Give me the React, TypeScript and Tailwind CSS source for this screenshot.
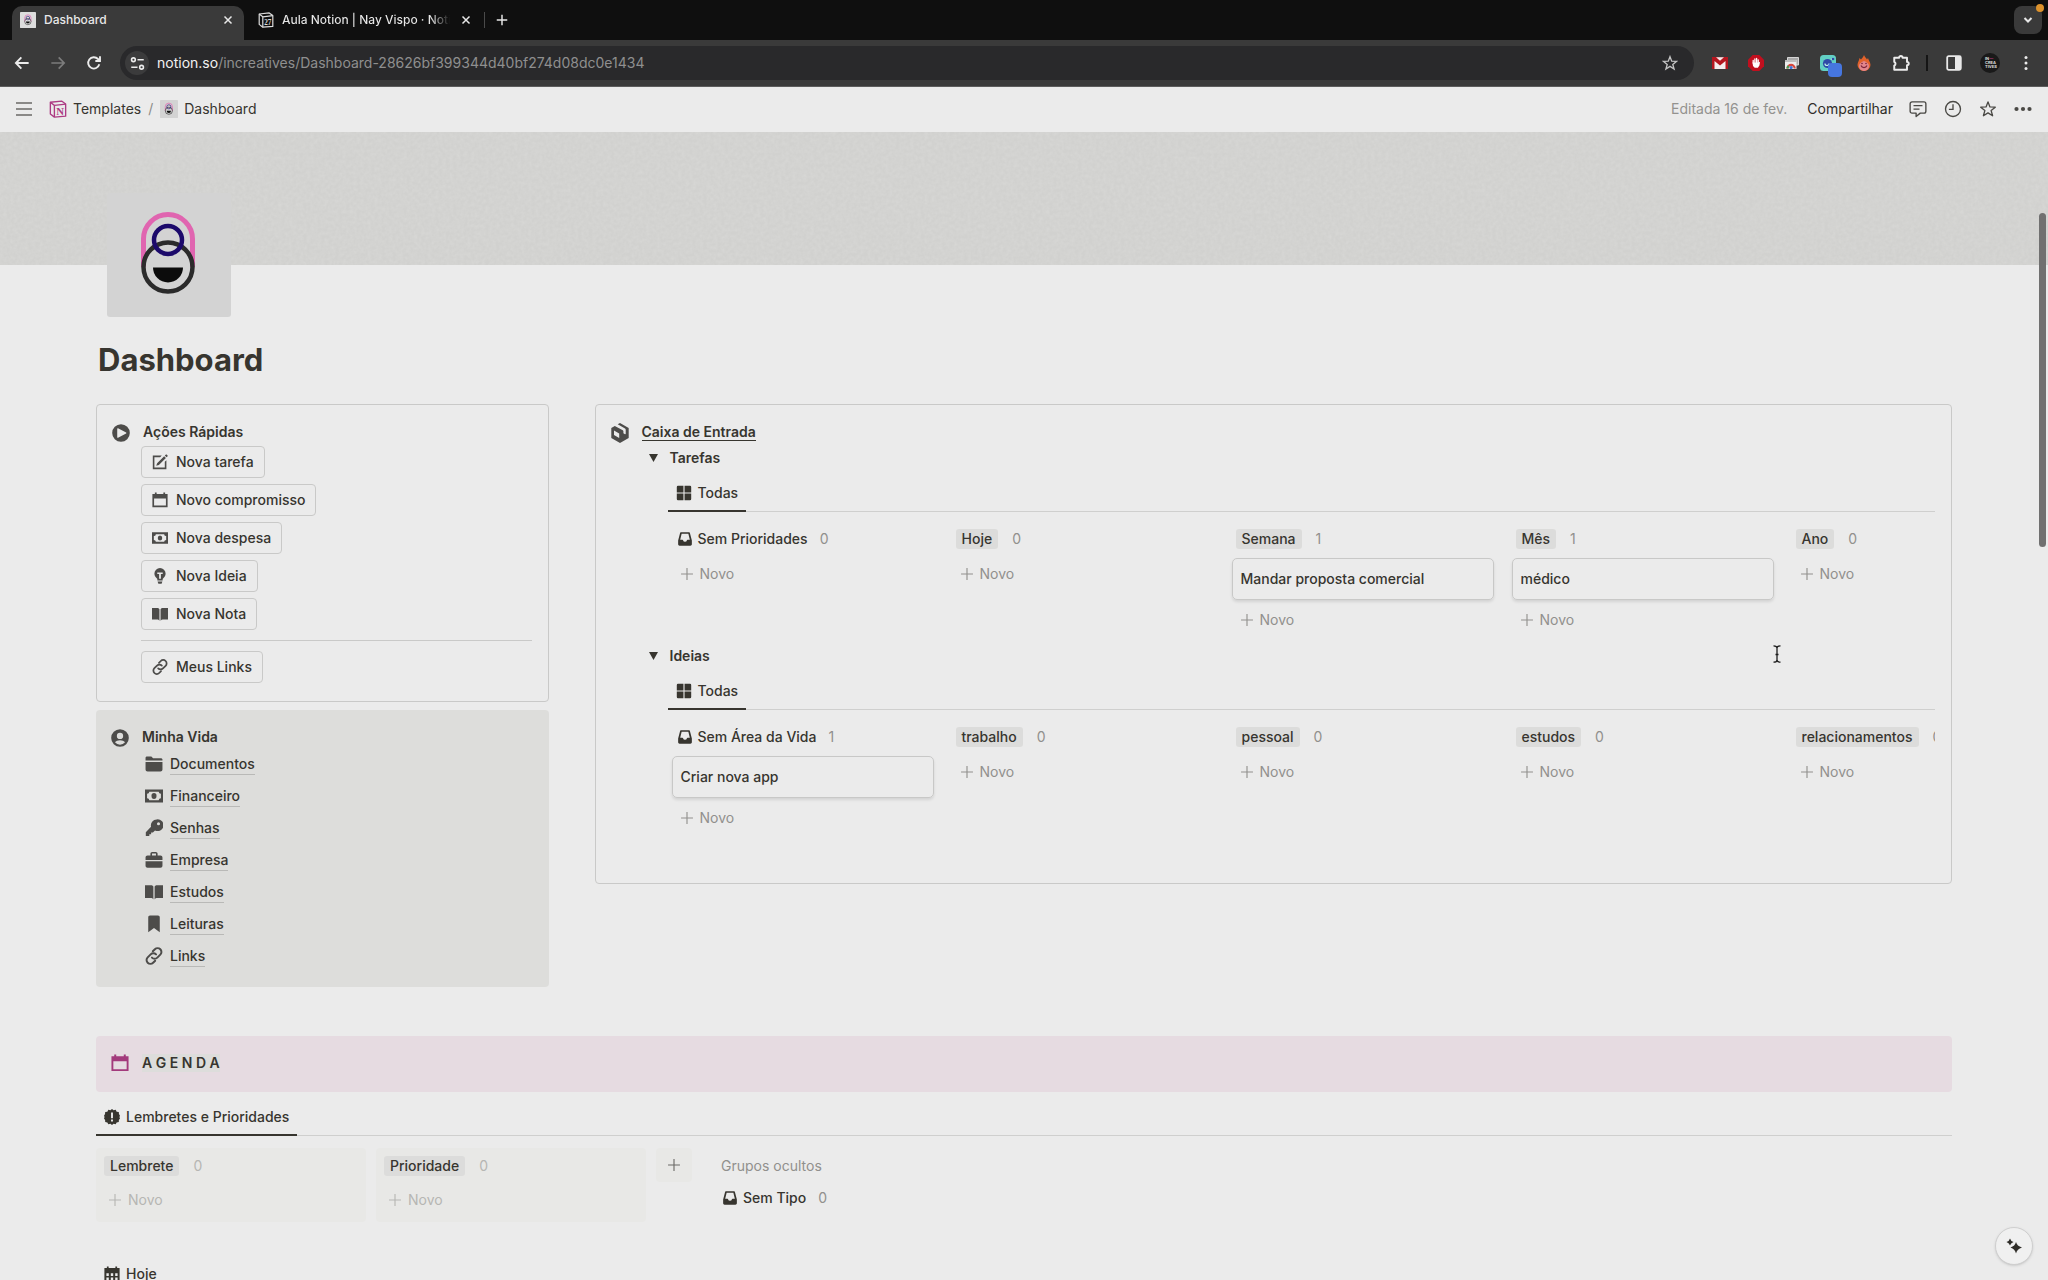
import React from "react";

type IconProps = { className?: string };

/* ---------- solid page icons, 20 x 20 grid ---------- */

const Svg = ({ className, children }: { className?: string; children: React.ReactNode }) => (
  <svg viewBox="0 0 20 20" fill="currentColor" aria-hidden="true" className={`shrink-0 ${className ?? ""}`}>
    {children}
  </svg>
);

const PlayIcon = ({ className }: IconProps) => (
  <Svg className={className}>
    <path fillRule="evenodd" d="M10 .2a9.800 9.800 0 1 0 0 19.600A9.800 9.800 0 0 0 10 .2ZM5.800 5.200v9.600c0 .5.500.7.900.5l9-4.700c.4-.3.4-.9 0-1.100l-9-4.800c-.4-.2-.9 0-.9.500Z" />
  </Svg>
);
const EditIcon = ({ className }: IconProps) => (
  <Svg className={className}>
    <path d="M1 2h11.200l-2 2H3v13h13v-7.200l2-2V19H1z" />
    <path d="m15.200 2.700 2.200 2.200-8.800 8.800-3.300 1.100 1.100-3.300zM16 1.900l1.100-1.100a.9.900 0 0 1 1.300 0l.9.900a.9.900 0 0 1 0 1.300l-1.100 1.100z" />
  </Svg>
);
const CalendarIcon = ({ className }: IconProps) => (
  <Svg className={className}>
    <path fillRule="evenodd" d="M3.600.5h2.200V2.500h8.400V.5h2.200v2h3.100V19H.5V2.500h3.100zM2.600 8v9h14.800V8z" />
  </Svg>
);
const CashIcon = ({ className }: IconProps) => (
  <Svg className={className}>
    <path fillRule="evenodd" d="M0 2.800h20v14.400H0zM4.800 5.200a2.600 2.600 0 0 1-2.500 2.400v4.800a2.600 2.600 0 0 1 2.500 2.400h10.400a2.600 2.600 0 0 1 2.500-2.400V7.600a2.600 2.600 0 0 1-2.500-2.400z" />
    <ellipse cx="10" cy="10" rx="2.800" ry="3.200" />
  </Svg>
);
const BulbIcon = ({ className }: IconProps) => (
  <Svg className={className}>
    <path fillRule="evenodd" d="M10 0a7 7 0 0 0-7 7c0 2.600 1.300 4.500 2.900 5.900.5.500.8 1 .8 1.700v.9h6.600v-.9c0-.7.300-1.200.8-1.700C15.700 11.500 17 9.600 17 7a7 7 0 0 0-7-7ZM6.600 5.600h6.800v1.900h-2.300v6H8.900v-6H6.600z" />
    <path d="M7 16.800h6l-1 3H8z" />
  </Svg>
);
const BookIcon = ({ className }: IconProps) => (
  <Svg className={className}>
    <path d="M0 2.500h6.500c1.200 0 2.200.6 2.800 1.500v14.300c-.7-.9-1.700-1.500-2.800-1.500H0zM20 2.500h-6.500c-1.200 0-2.200.6-2.800 1.500v14.300c.7-.9 1.700-1.500 2.800-1.500H20z" />
  </Svg>
);
const LinkIcon = ({ className }: IconProps) => (
  <Svg className={className}>
    <g fill="none" stroke="currentColor" strokeWidth="2.200" strokeLinecap="round">
      <path d="M8.700 4.800 11 2.500a4.200 4.200 0 0 1 6 0 4.200 4.200 0 0 1 0 6l-3.300 3.300a4.200 4.200 0 0 1-6 0" />
      <path d="M11.300 15.200 9 17.500a4.200 4.200 0 0 1-6 0 4.200 4.200 0 0 1 0-6l3.300-3.300a4.200 4.200 0 0 1 6 0" />
    </g>
  </Svg>
);
const PersonIcon = ({ className }: IconProps) => (
  <Svg className={className}>
    <path fillRule="evenodd" d="M10 .2a9.800 9.800 0 1 0 0 19.600A9.800 9.800 0 0 0 10 .2ZM10 4.200a3.500 3.500 0 1 1 0 7 3.500 3.500 0 0 1 0-7ZM4.400 14.800c1-1.500 3.200-2.300 5.600-2.300s4.600.8 5.600 2.300A7.300 7.300 0 0 1 10 17.400a7.300 7.300 0 0 1-5.600-2.600Z" />
  </Svg>
);
const FolderIcon = ({ className }: IconProps) => (
  <Svg className={className}>
    <path d="M.6 6V3.200c0-.9.700-1.600 1.600-1.600h4.200c.5 0 .9.200 1.200.5L9 3.500h8.600c1 0 1.800.7 1.800 1.600V6zM.6 7.700h18.800v8.500c0 1.200-1 2.200-2.200 2.200H2.800c-1.200 0-2.200-1-2.200-2.200z" />
  </Svg>
);
const KeyIcon = ({ className }: IconProps) => (
  <Svg className={className}>
    <path fillRule="evenodd" d="M13 .5a6.500 6.500 0 0 0-6.300 8L.9 14.700v4.200h3.900v-2h2v-2h2l2.300-2.200a6.500 6.500 0 1 0 1.900-12.200ZM15 3.600a1.700 1.700 0 1 1 0 3.400 1.700 1.700 0 0 1 0-3.400Z" />
  </Svg>
);
const BriefcaseIcon = ({ className }: IconProps) => (
  <Svg className={className}>
    <path fillRule="evenodd" d="M6 5V3c0-1.100.9-2 2-2h4c1.100 0 2 .9 2 2v2h3.200c1.200 0 2.200 1 2.200 2.200V10H.6V7.200C.6 6 1.600 5 2.800 5zm1.800 0h4.400V2.900H7.800z" />
    <path d="M.6 11.500h18.800v5c0 1.200-1 2.200-2.200 2.200H2.800c-1.200 0-2.200-1-2.200-2.200z" />
  </Svg>
);
const BookmarkIcon = ({ className }: IconProps) => (
  <Svg className={className}>
    <path d="M5.500.6h9c1 0 1.900.8 1.900 1.900v16.600L10 14.500l-6.400 4.600V2.500C3.600 1.400 4.500.6 5.500.6Z" />
  </Svg>
);
const BoxIcon = ({ className }: IconProps) => (
  <Svg className={className}>
    <path d="M10 0 7.700 1.300l7.300 4.200c.4.300.7.700.7 1.200v4.100c0 .4-.4.600-.7.400l-1.600-.9V8.200c0-.4-.2-.7-.6-.9L4.800 2.900 1.300 5v10L10 20l8.700-5V5zM4 7.600l5.200 3v4.300L4 11.900z" fillRule="evenodd" />
  </Svg>
);
const AlertBadgeIcon = ({ className }: IconProps) => (
  <Svg className={className}>
    <path fillRule="evenodd" d="m10 0 2 1.700L14.600 1l1.200 2.300 2.700.4.200 2.700L20 8.500 19.300 10l.7 1.800-1.400 2-.1 2.500-2.700.5L14.600 19l-2.600-.6L10 20l-2-1.600-2.600.6-1.200-2.200-2.700-.5-.1-2.500-1.400-2L.7 10 0 8.500l1.300-2.100.2-2.700 2.700-.4L5.400 1 8 1.700zM8.800 4.500v7h2.400v-7zm0 8.700v2.300h2.400v-2.300z" />
  </Svg>
);
const MonthIcon = ({ className }: IconProps) => (
  <Svg className={className}>
    <path fillRule="evenodd" d="M3.600.5h2.200v2h8.400v-2h2.200v2h3.100V20H.5V2.500h3.100zM3 9v3.500h3V9zm5.500 0v3.500h3V9zM14 9v3.500h3V9zM3 14.500V18h3v-3.500zm5.500 0V18h3v-3.500zm5.500 0V18h3v-3.500z" />
  </Svg>
);
const GridIcon = ({ className }: IconProps) => (
  <Svg className={className}>
    <path d="M2.500 1h6.800v8.300H1V2.500A1.500 1.500 0 0 1 2.500 1ZM10.700 1h6.800A1.500 1.500 0 0 1 19 2.500v6.800h-8.300zM1 10.700h8.300V19H2.500A1.500 1.500 0 0 1 1 17.500zM10.700 10.700H19v6.800a1.500 1.500 0 0 1-1.500 1.500h-6.800z" />
  </Svg>
);
const InboxIcon = ({ className }: IconProps) => (
  <Svg className={className}>
    <path fillRule="evenodd" d="M4.600.5h10.800c.9 0 1.600.6 1.700 1.400L19.800 12v5.500c0 1.100-.9 2-2 2H2.200c-1.100 0-2-.9-2-2V12L2.900 1.900C3 1.100 3.700.5 4.600.5Zm.6 2.100L3.100 11h3.300c.4 0 .7.300.8.700a2.900 2.900 0 0 0 5.600 0c.1-.4.4-.7.8-.7h3.300l-2.100-8.400z" />
  </Svg>
);
const PlusIcon = ({ className }: IconProps) => (
  <Svg className={className}>
    <path d="M9.200 1.500h1.600v7.700h7.700v1.600h-7.700v7.700H9.200v-7.700H1.500V9.200h7.700z" />
  </Svg>
);

/* ---------- header and browser icons ---------- */

const Line = ({ className, w = 2, children }: { className?: string; w?: number; children: React.ReactNode }) => (
  <svg viewBox="0 0 24 24" fill="none" stroke="currentColor" strokeWidth={w} aria-hidden="true" className={`shrink-0 ${className ?? ""}`}>
    {children}
  </svg>
);
const STAR = "m12 2.500 2.600 6.700 7.100.4-5.500 4.500 1.900 6.900-6.100-3.900L5.900 21l1.900-6.900-5.500-4.500 7.100-.4z";

const CapsuleLogo = ({ className, bg = "#d3d3d3" }: { className?: string; bg?: string }) => (
  <svg viewBox="0 0 124 124" aria-hidden="true" className={`shrink-0 ${className ?? ""}`}>
    <rect width="124" height="124" rx="3" fill={bg} />
    <path d="M36.500 74V46a24.500 24.500 0 0 1 49 0V74" fill="none" stroke="#e065b0" strokeWidth="5" />
    <circle cx="61" cy="74" r="24.500" fill="none" stroke="#2b2b2b" strokeWidth="4.500" />
    <circle cx="61" cy="47" r="14" fill="none" stroke="#1c0a6b" strokeWidth="4.500" />
    <path d="M46 74.500h30a15 15 0 0 1-30 0Z" fill="#0c0c0c" />
  </svg>
);

const NotionCube = ({ className, color, label }: { className?: string; color: string; label: string }) => (
  <svg viewBox="0 0 20 20" aria-hidden="true" className={`shrink-0 ${className ?? ""}`}>
    <path d="M1.500 2.500 14 1.200l4.500 3.300V18L6 19l-4.500-3.500z" fill="none" stroke={color} strokeWidth="1.500" strokeLinejoin="round" />
    <path d="M1.500 2.500 6 6v13M6 6l12.500-1.500" fill="none" stroke={color} strokeWidth="1.500" />
    <text x="12.300" y="16.500" textAnchor="middle" fontSize={label.length > 1 ? 9 : 12} fontWeight="700" fontFamily="Liberation Serif, serif" fill={color}>
      {label}
    </text>
  </svg>
);

/* ---------- browser chrome ---------- */

function BrowserChrome() {
  return (
    <header className="shrink-0">
      <div className="flex h-10 items-end justify-between bg-[#0f0f0f] text-xs text-[#e8e8e8]">
        <div className="flex items-center pl-3">
          <div className="flex h-[34px] w-58 items-center rounded-t-[10px] bg-[#3a3a3a] pr-1.5 pb-1.5 pl-2">
            <CapsuleLogo className="size-4" bg="#dcdcdc" />
            <span className="ml-2 flex-1 font-medium">Dashboard</span>
            <button aria-label="Fechar aba Dashboard" className="p-1">
              <Line className="size-3" w={3}><path d="M5 5 19 19M19 5 5 19" /></Line>
            </button>
          </div>
          <div className="flex h-[34px] items-center pb-1.5 pl-3.5">
            <NotionCube className="size-4" color="#dddddd" label="27" />
            <span className="ml-2 w-[168px] overflow-hidden bg-linear-to-r from-[#e8e8e8] from-88% to-transparent bg-clip-text font-medium whitespace-nowrap text-transparent">
              Aula Notion | Nay Vispo · Notion
            </span>
            <button aria-label="Fechar aba Aula Notion" className="ml-1.5 p-1">
              <Line className="size-3" w={3}><path d="M5 5 19 19M19 5 5 19" /></Line>
            </button>
            <span className="ml-2 h-4 w-px bg-[#4a4a4a]" />
            <button aria-label="Nova aba" className="ml-1.5 p-1">
              <Line className="size-3.5" w={2.500}><path d="M12 3v18M3 12h18" /></Line>
            </button>
          </div>
        </div>
        <div className="relative mr-1.5 mb-1.5">
          <button aria-label="Pesquisar abas" className="flex size-7 items-center justify-center rounded-lg bg-[#3a3a3a]">
            <Line className="size-3" w={4}><path d="m5 8 7 7 7-7" /></Line>
          </button>
          <span className="absolute -top-0.5 -right-0.5 size-2 rounded-full bg-[#dd922c]" />
        </div>
      </div>

      <div className="flex h-[47px] items-center border-b border-[#5c5c5c] bg-[#3a3a3a] pr-4 pl-3 text-[#ececec]">
        <button aria-label="Voltar" className="p-0.5"><Line className="size-4" w={2.800}><path d="M22 12H3M11 3.500 2.800 12l8.200 8.500" /></Line></button>
        <button aria-label="Avançar" className="ml-4 p-0.5 text-[#7c7c7c]"><Line className="size-4" w={2.600}><path d="M2 12h19M13 3.500l8.200 8.500-8.200 8.500" /></Line></button>
        <button aria-label="Recarregar" className="ml-4 p-0.5">
          <Line className="size-4" w={2.800}><path d="M20 14a8.500 8.500 0 1 1-2-8l2.500 2.500" /><path d="M21 2v7h-7" /></Line>
        </button>
        <div className="ml-4 flex h-[34px] flex-1 items-center rounded-full bg-[#29292b] pr-4 pl-[5px]">
          <button aria-label="Informações do site" className="flex size-6 items-center justify-center rounded-full bg-[#3b3b3c]">
            <Line className="size-[15px]" w={2.500}>
              <circle cx="5.500" cy="6" r="3" /><path d="M12 6h10M2 18h10" /><circle cx="18.500" cy="18" r="3" />
            </Line>
          </button>
          <p className="ml-2 flex-1 text-sm text-[#8f8f8f]">
            <span className="text-[#f2f2f2]">notion.so</span>/increatives/Dashboard-28626bf399344d40bf274d08dc0e1434
          </p>
          <button aria-label="Adicionar aos favoritos" className="text-[#c4c4c4]"><Line className="size-4"><path d={STAR} /></Line></button>
        </div>

        <div className="ml-[18px] flex items-center gap-5">
          <button aria-label="Gmail">
            <svg viewBox="0 0 16 16" className="size-4" aria-hidden="true">
              <path d="M0 2h16v12H0z" fill="#b3161f" />
              <path d="M2.500 6 8 10.500 13.500 6v8h-11z" fill="#f3eded" />
              <path d="M4 2.200h8L8 5.800z" fill="#f3eded" />
            </svg>
          </button>
          <button aria-label="AdBlock">
            <svg viewBox="0 0 16 16" className="size-4" aria-hidden="true">
              <path d="M4.700 0h6.600L16 4.700v6.600L11.300 16H4.700L0 11.300V4.700z" fill="#c10f1e" />
              <path d="M5.200 8V5.500M6.900 7.500V4M8.600 7.500V3.500M10.200 8V4.800" stroke="#fff" strokeWidth="1.300" strokeLinecap="round" />
              <path d="M4.500 7.500h6.300l1.300-.8-.7 3.800-1.500 2.300H6.700L5 11z" fill="#fff" />
            </svg>
          </button>
          <button aria-label="Captura de tela">
            <svg viewBox="0 0 16 16" className="size-4" aria-hidden="true">
              <path d="M3.500 2.500H14.500v7.500H3.500z" fill="#a9a9a9" stroke="#d5d5d5" />
              <path d="M1 5h11.500v9H1z" fill="#ececec" />
              <path d="M1 5h11.500v2H1z" fill="#bdbdbd" />
              <path d="M3.500 13.500a3.600 3.600 0 0 1 7.200 0" fill="none" stroke="#d5473d" strokeWidth="2.200" />
              <path d="M3.500 13.500a3.600 3.600 0 0 1 1-2.500" fill="none" stroke="#3d9c55" strokeWidth="2.200" />
              <circle cx="7.100" cy="12.600" r="1.600" fill="#3f73d8" />
            </svg>
          </button>
          <button aria-label="Assistente de extensão" className="relative">
            <svg viewBox="0 0 16 16" className="size-4" aria-hidden="true">
              <rect width="16" height="16" rx="3.500" fill="#62cfc4" />
              <circle cx="7.500" cy="8.500" r="4.600" fill="#2f4aa8" />
              <path d="M5 8.500a2 2 0 0 0 4 0M11 4.500l2.500-1.500" stroke="#bfeee6" fill="none" strokeWidth="1.200" />
              <circle cx="13" cy="4" r="1.300" fill="#2f4aa8" />
            </svg>
            <span className="absolute top-2 left-2 size-3.5 rounded-[4px] bg-[#4676e0]" />
          </button>
          <button aria-label="Hotjar">
            <svg viewBox="0 0 16 16" className="size-4" aria-hidden="true">
              <path d="M8 0c.5 2 2.500 3 3 4.500L12 3c.3 2 2.500 4 2.500 7A6.200 6.200 0 0 1 8 16a6.200 6.200 0 0 1-6.500-6c0-3 2-5 2-7L5 4.500C6 3 7.500 2 8 0Z" fill="#e2622b" />
              <path d="M8 6c2.500 1 5 2.500 5 5a5 5 0 0 1-10 0c0-2.500 2.500-4 5-5Z" fill="#e3868d" />
              <path d="M5 10.500a3.200 3.200 0 0 0 6 0" fill="none" stroke="#7c2338" strokeWidth="1.200" />
              <circle cx="6" cy="8.500" r=".8" fill="#7c2338" /><circle cx="10" cy="8.500" r=".8" fill="#7c2338" />
            </svg>
          </button>
          <button aria-label="Extensões">
            <Line className="size-[18px]" w={2.600}>
              <path strokeLinejoin="round" d="M3 5h6.500a2.300 2.300 0 0 1 4.600 0H20v5.500a2.300 2.300 0 0 1 0 4.600V21H3v-5.500a2.700 2.700 0 0 0 0-5z" />
            </Line>
          </button>
        </div>
        <span className="ml-4 h-4 w-0.5 bg-[#151515]" />
        <div className="ml-[18px] flex items-center gap-[18px]">
          <button aria-label="Painel lateral">
            <svg viewBox="0 0 16 16" className="size-4" aria-hidden="true">
              <rect x="1.200" y="1.200" width="13.600" height="13.600" rx="1.500" fill="none" stroke="#e8e8e8" strokeWidth="1.800" />
              <path d="M9 1h6v14H9z" fill="#e8e8e8" />
            </svg>
          </button>
          <button aria-label="Perfil" className="flex size-5 flex-col items-start justify-center rounded-full bg-[#191919] pl-[5px] text-[4px] leading-[4px] font-bold text-[#dddddd]">
            <span>IN<span className="text-[#c13a83]">—</span></span><span>CREA</span><span>TIVES</span>
          </button>
          <button aria-label="Menu do navegador" className="pr-1 pl-1.5">
            <svg viewBox="0 0 4 16" className="h-4 w-1" fill="#ececec" aria-hidden="true">
              <circle cx="2" cy="2.500" r="1.500" /><circle cx="2" cy="8" r="1.500" /><circle cx="2" cy="13.500" r="1.500" />
            </svg>
          </button>
        </div>
      </div>
    </header>
  );
}

/* ---------- Notion page header ---------- */

function TopBar() {
  return (
    <nav className="flex h-[45px] shrink-0 items-center justify-between px-4 pb-0.5 text-sm text-[#37352f]">
      <div className="flex items-center">
        <button aria-label="Abrir menu" className="text-[#6b6a67]"><Line className="size-4" w={2.200}><path d="M0 3h24M0 12h24M0 21h24" /></Line></button>
        <a href="#templates" className="ml-[17px] flex items-center gap-1.5">
          <NotionCube className="size-[18px]" color="#ad3a83" label="N" />Templates
        </a>
        <span className="mx-[7px] text-[#8c8b88]">/</span>
        <a href="#dashboard" className="flex items-center gap-1.5">
          <CapsuleLogo className="size-[18px]" />Dashboard
        </a>
      </div>
      <div className="flex items-center text-[#4a4945]">
        <span className="text-[#93928f]">Editada 16 de fev.</span>
        <button className="ml-5 text-[#2f2d28]">Compartilhar</button>
        <button aria-label="Comentários" className="ml-4">
          <Line className="size-[18px]" w={1.800}>
            <path strokeLinejoin="round" d="M4 2.500h16a2.500 2.500 0 0 1 2.500 2.500v10a2.500 2.500 0 0 1-2.500 2.500h-5L9.500 22v-4.500H4A2.500 2.500 0 0 1 1.500 15V5A2.500 2.500 0 0 1 4 2.500Z" /><path d="M6 7.500h12M6 12.200h8" />
          </Line>
        </button>
        <button aria-label="Atualizações" className="ml-[17px]"><Line className="size-[18px]" w={1.800}><circle cx="12" cy="12" r="10" /><path d="M12 5.500v7H6.500" /></Line></button>
        <button aria-label="Favoritar" className="ml-[17px]"><Line className="size-[18px]" w={1.800}><path strokeLinejoin="round" d={STAR} /></Line></button>
        <button aria-label="Mais ações" className="ml-[17px]">
          <svg viewBox="0 0 18 18" className="size-[18px]" fill="currentColor" aria-hidden="true"><circle cx="2.500" cy="9" r="2.100" /><circle cx="9" cy="9" r="2.100" /><circle cx="15.500" cy="9" r="2.100" /></svg>
        </button>
      </div>
    </nav>
  );
}

function Cover() {
  return (
    <div className="h-[133px] overflow-hidden bg-[#d1d1cf]">
      <svg className="size-full" aria-hidden="true">
        <filter id="grain">
          <feTurbulence type="fractalNoise" baseFrequency="0.28" numOctaves="2" seed="4" />
          <feColorMatrix values="0 0 0 0 1  0 0 0 0 1  0 0 0 0 0.98  0.6 0 0 0 -0.17" />
        </filter>
        <rect width="100%" height="100%" filter="url(#grain)" opacity="0.35" />
      </svg>
    </div>
  );
}

/* ---------- left column ---------- */

const actions = [
  { label: "Nova tarefa", Icon: EditIcon },
  { label: "Novo compromisso", Icon: CalendarIcon },
  { label: "Nova despesa", Icon: CashIcon },
  { label: "Nova Ideia", Icon: BulbIcon },
  { label: "Nova Nota", Icon: BookIcon },
];

const ActionButton = ({ label, Icon }: { label: string; Icon: React.FC<IconProps> }) => (
  <button className="flex h-8 items-center gap-2 rounded border border-[#c9c9c8] px-2.5 font-medium">
    <Icon className="size-4 text-[#4d4c4a]" />
    {label}
  </button>
);

const QuickActions = () => (
  <section className="flex rounded border border-[#c9c9c8] pt-[15px] pr-4 pb-[18px] pl-[15px]">
    <PlayIcon className="mt-1 size-[18px] text-[#4d4c4a]" />
    <div className="ml-[11px] flex-1">
      <h2 className="pl-0.5 leading-6 font-semibold">Ações Rápidas</h2>
      <div className="mt-0.5 flex flex-col items-start gap-1.5">
        {actions.map((a) => <ActionButton key={a.label} {...a} />)}
      </div>
      <hr className="my-2.5 border-[#c9c9c8]" />
      <ActionButton label="Meus Links" Icon={LinkIcon} />
    </div>
  </section>
);

const pages = [
  { label: "Documentos", Icon: FolderIcon },
  { label: "Financeiro", Icon: CashIcon },
  { label: "Senhas", Icon: KeyIcon },
  { label: "Empresa", Icon: BriefcaseIcon },
  { label: "Estudos", Icon: BookIcon },
  { label: "Leituras", Icon: BookmarkIcon },
  { label: "Links", Icon: LinkIcon },
];

const MyLife = () => (
  <section className="mt-2 flex rounded bg-[#dddddb] px-[15px] pt-[15px] pb-[15px]">
    <PersonIcon className="mt-1 size-[18px] text-[#4d4c4a]" />
    <div className="ml-[13px]">
      <h2 className="leading-[23px] font-semibold">Minha Vida</h2>
      <ul>
        {pages.map(({ label, Icon }) => (
          <li key={label}>
            <a href={`#${label.toLowerCase()}`} className="flex h-8 items-center gap-[7px] pl-[3px] font-medium">
              <Icon className="size-[18px] text-[#4d4c4a]" />
              <span className="border-b border-[#b9b9b7]">{label}</span>
            </a>
          </li>
        ))}
      </ul>
    </div>
  </section>
);

/* ---------- boards ---------- */

type Column = { name: string; count: number; card?: string; none?: boolean };

const Pill = ({ children }: { children: React.ReactNode }) => (
  <span className="rounded-[3px] bg-[#dcdcdb] px-1.5 leading-5 font-medium">{children}</span>
);

const NewButton = ({ faded }: { faded?: boolean }) => (
  <button className={faded ? "flex h-8 items-center gap-1.5 pl-2 text-[#b6b6b3]" : "flex h-8 items-center gap-1.5 pl-2 text-[#91908d]"}>
    <PlusIcon className="size-3.5" />
    Novo
  </button>
);

const BoardColumn = ({ name, count, card, none }: Column) => (
  <div className="w-[262px] shrink-0">
    <div className="flex h-[39px] items-center pl-1">
      {none ? (
        <span className="flex items-center gap-1.5 pl-0.5 font-medium"><InboxIcon className="size-3.5" />{name}</span>
      ) : (
        <Pill>{name}</Pill>
      )}
      <span className={none ? "ml-3 text-[#91908d]" : "ml-3.5 text-[#91908d]"}>{count}</span>
    </div>
    {card && (
      <a href="#card" className="mb-1 flex h-[42px] items-center rounded-[5px] border border-[#c8c8c7] pl-2 font-medium shadow-[0_2px_3px_rgba(0,0,0,0.1)]">
        {card}
      </a>
    )}
    <NewButton />
  </div>
);

const TabRow = ({ label, Icon }: { label: string; Icon: React.FC<IconProps> }) => (
  <div className="flex h-[31px] border-b border-[#cfcfce]">
    <button className="-mb-px flex items-start gap-1.5 border-b-2 border-[#37352f] px-2 font-medium">
      <Icon className="mt-1 size-4" />
      <span className="leading-6">{label}</span>
    </button>
  </div>
);

const taskColumns: Column[] = [
  { name: "Sem Prioridades", count: 0, none: true },
  { name: "Hoje", count: 0 },
  { name: "Semana", count: 1, card: "Mandar proposta comercial" },
  { name: "Mês", count: 1, card: "médico" },
  { name: "Ano", count: 0 },
];
const ideaColumns: Column[] = [
  { name: "Sem Área da Vida", count: 1, none: true, card: "Criar nova app" },
  { name: "trabalho", count: 0 },
  { name: "pessoal", count: 0 },
  { name: "estudos", count: 0 },
  { name: "relacionamentos", count: 0 },
];

const Toggle = ({ title, columns }: { title: string; columns: Column[] }) => (
  <section className="h-[198px]">
    <h3>
      <button aria-expanded="true" className="flex h-7 items-center font-semibold">
        <svg viewBox="0 0 9 8" className="ml-[9px] h-2 w-[9px]" fill="currentColor" aria-hidden="true"><path d="M0 0h9L4.500 8z" /></svg>
        <span className="ml-3">{title}</span>
      </button>
    </h3>
    <div className="mt-[9px] ml-7">
      <TabRow label="Todas" Icon={GridIcon} />
      <div className="flex gap-[18px] overflow-hidden pt-[7px] pl-1">
        {columns.map((c) => <BoardColumn key={c.name} {...c} />)}
      </div>
    </div>
  </section>
);

const Inbox = () => (
  <section className="flex rounded border border-[#c9c9c8] pt-[15px] pr-4 pb-[43px] pl-3.5">
    <BoxIcon className="mt-[3px] size-5 text-[#4d4c4a]" />
    <div className="ml-2.5 min-w-0 flex-1">
      <h2 className="leading-6 font-semibold">
        <a href="#caixa" className="ml-0.5 border-b border-[#37352f]">Caixa de Entrada</a>
      </h2>
      <Toggle title="Tarefas" columns={taskColumns} />
      <Toggle title="Ideias" columns={ideaColumns} />
    </div>
  </section>
);

/* ---------- agenda ---------- */

const Agenda = () => (
  <>
    <section className="mt-[49px] flex h-14 items-center rounded bg-[#e6dbe1] pb-0.5 pl-[15px]">
      <CalendarIcon className="size-[18px] text-[#a33a7c]" />
      <h2 className="ml-[13px] bg-[#dddddb] leading-[18px] font-semibold">A G E N D A</h2>
    </section>

    <div className="pt-[13px]">
      <TabRow label="Lembretes e Prioridades" Icon={AlertBadgeIcon} />
      <div className="mt-3 flex items-start">
        {["Lembrete", "Prioridade"].map((n) => (
          <div key={n} className="mr-2.5 h-[74px] w-[270px] rounded bg-[#e8e8e6] px-2">
            <div className="flex h-9 items-center">
              <Pill>{n}</Pill>
              <span className="ml-3.5 text-[#b6b6b3]">0</span>
            </div>
            <div className="-ml-1"><NewButton faded /></div>
          </div>
        ))}
        <button aria-label="Adicionar grupo" className="flex h-[34px] w-9 items-center justify-center rounded bg-[#e8e8e6] text-[#6b6a67]">
          <PlusIcon className="size-3.5" />
        </button>
        <div className="ml-[29px]">
          <p className="leading-9 text-[#91908d]">Grupos ocultos</p>
          <div className="flex h-7 items-center">
            <InboxIcon className="ml-0.5 size-3.5" />
            <span className="ml-1.5 font-medium">Sem Tipo</span>
            <span className="ml-3 text-[#91908d]">0</span>
          </div>
        </div>
      </div>
      <h3 className="mt-10 flex items-center gap-1.5 pl-2 leading-6 font-medium">
        <MonthIcon className="size-4" />Hoje
      </h3>
    </div>
  </>
);

export default function App() {
  return (
    <div className="relative flex h-screen flex-col overflow-hidden bg-[#ebebeb] font-[Inter,sans-serif] text-sm text-[#37352f]">
      <BrowserChrome />
      <TopBar />
      <main className="min-h-0 flex-1 overflow-hidden">
        <Cover />
        <div className="px-24">
          <CapsuleLogo className="relative -mt-[72px] ml-[11px] size-31" />
          <h1 className="mt-[23px] ml-0.5 text-[31px] leading-10 font-bold">Dashboard</h1>
          <div className="mt-6 flex items-start gap-[46px]">
            <div className="min-w-0 flex-1"><QuickActions /><MyLife /></div>
            <div className="min-w-0 flex-3"><Inbox /></div>
          </div>
          <Agenda />
        </div>
      </main>

      <span className="absolute top-[213px] right-0.5 h-[334px] w-[7px] rounded-full bg-[#707070]" />
      <svg viewBox="0 0 8 18" className="absolute top-[645px] left-[1773px] h-[18px] w-2" fill="none" stroke="#1d1d1d" strokeWidth="1.300" aria-hidden="true">
        <path d="M.5.8C2.500.8 4 1.200 4 3v12c0 1.800-1.500 2.200-3.500 2.200M7.500.8C5.500.8 4 1.200 4 3M4 15c0 1.800 1.500 2.200 3.500 2.200M2.500 9.500h3" />
      </svg>
      <button aria-label="Pergunte à IA" className="absolute right-[15px] bottom-[15px] flex size-[38px] items-center justify-center rounded-full border border-[#cfcfcf] bg-[#f0f0f0] text-[#2f2d28] shadow-sm">
        <svg viewBox="0 0 16 16" className="size-4" fill="currentColor" aria-hidden="true">
          <path d="M10 4q1 4 6 5.500Q11 11 10 15.500 9 11 4.500 9.500 9 8 10 4ZM4 .5q.6 2.500 3.500 3.500Q4.600 5 4 7.500 3.400 5 .5 4 3.400 3 4 .5Z" />
        </svg>
      </button>
    </div>
  );
}
